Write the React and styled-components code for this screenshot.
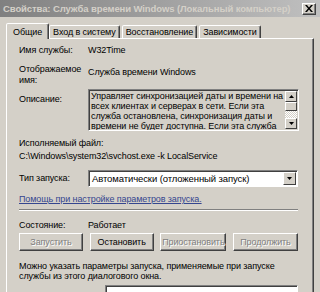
import React from "react";
import styled, { createGlobalStyle } from "styled-components";

const GlobalStyle = createGlobalStyle`
  html, body {
    margin: 0;
    padding: 0;
    background: #d4d0c8;
  }
  body {
    font-family: "Liberation Sans", Arial, sans-serif;
    font-size: 9px;
    letter-spacing: -0.1px;
    color: #000;
  }
`;

const tabs = ["Общие", "Вход в систему", "Восстановление", "Зависимости"];

const buttons = [
  { label: "Запустить", width: 64, disabled: true },
  { label: "Остановить", width: 64 },
  { label: "Приостановить", width: 66, disabled: true },
  { label: "Продолжить", width: 65, disabled: true },
];

const descLines = [
  "Управляет синхронизацией даты и времени на",
  "всех клиентах и серверах в сети. Если эта",
  "служба остановлена, синхронизация даты и",
  "времени не будет доступна. Если эта служба",
];

const App = () => {
  return (
    <Window>
      <GlobalStyle />
      <TitleBar>
        <Title>Свойства: Служба времени Windows (Локальный компьютер)</Title>
        <CloseButton>
          <svg width="8" height="7" viewBox="0 0 8 7">
            <path d="M0 0h2l2 2.5L6 0h2L5 3.5 8 7H6L4 4.5 2 7H0l3-3.5z" fill="#000" />
          </svg>
        </CloseButton>
      </TitleBar>

      <Body>
        <TabStrip>
          {tabs.map((tab, i) => (
            <Tab key={tab} active={i === 0}>
              {tab}
            </Tab>
          ))}
        </TabStrip>

        <Panel>
          <FieldRow height={19}>
            <Label>Имя службы:</Label>
            <Value>W32Time</Value>
          </FieldRow>

          <FieldRow height={23}>
            <Label>
              Отображаемое
              <br />
              имя:
            </Label>
            <Value offset={3}>Служба времени Windows</Value>
          </FieldRow>

          <FieldRow height={44} top={2}>
            <Label offset={5}>Описание:</Label>
            <DescBox>
              <DescText>
                {descLines.map((line) => (
                  <DescLine key={line}>{line}</DescLine>
                ))}
              </DescText>
              <ScrollBar>
                <ScrollArrow>
                  <svg width="5" height="3" viewBox="0 0 5 3">
                    <path d="M2.5 0L5 3H0z" fill="#000" />
                  </svg>
                </ScrollArrow>
                <ScrollThumb />
                <ScrollTrack />
                <ScrollArrow>
                  <svg width="5" height="3" viewBox="0 0 5 3">
                    <path d="M0 0h5L2.5 3z" fill="#000" />
                  </svg>
                </ScrollArrow>
              </ScrollBar>
            </DescBox>
          </FieldRow>

          <Plain top={5}>Исполняемый файл:</Plain>
          <Plain top={2}>C:\Windows\system32\svchost.exe -k LocalService</Plain>

          <FieldRow height={17} top={8}>
            <Label offset={3}>Тип запуска:</Label>
            <Select>
              <SelectText>Автоматически (отложенный запуск)</SelectText>
              <SelectButton>
                <svg width="5" height="3" viewBox="0 0 5 3">
                  <path d="M0 0h5L2.5 3z" fill="#000" />
                </svg>
              </SelectButton>
            </Select>
          </FieldRow>

          <HelpLink>Помощь при настройке параметров запуска.</HelpLink>

          <Separator />

          <FieldRow height={13} top={9}>
            <Label>Состояние:</Label>
            <Value>Работает</Value>
          </FieldRow>

          <ButtonRow>
            {buttons.map((b) => (
              <Button key={b.label} width={b.width} disabled={b.disabled}>
                {b.label}
              </Button>
            ))}
          </ButtonRow>

          <Note>
            Можно указать параметры запуска, применяемые при запуске
            <br />
            службы из этого диалогового окна.
          </Note>

          <ParamsRow>
            <ParamsInput />
          </ParamsRow>
        </Panel>
      </Body>
    </Window>
  );
};

const Window = styled.div`
  width: 320px;
  height: 292px;
  overflow: hidden;
  display: flex;
  flex-direction: column;
  background: #d4d0c8;
`;

const TitleBar = styled.div`
  height: 17px;
  display: flex;
  align-items: center;
  justify-content: space-between;
  padding: 0 4px 0 3px;
  background: linear-gradient(to right, #808080, #c0c0c0);
  flex-shrink: 0;
`;

const Title = styled.div`
  font-weight: bold;
  font-size: 9.5px;
  letter-spacing: -0.1px;
  color: #d4d0c8;
  white-space: nowrap;
`;

const CloseButton = styled.div`
  width: 12px;
  height: 10px;
  display: flex;
  align-items: center;
  justify-content: center;
  background: #d4d0c8;
  border: 1px solid;
  border-color: #fff #404040 #404040 #fff;
  box-shadow: inset -1px -1px 0 #808080;
`;

const Body = styled.div`
  flex: 1;
  display: flex;
  flex-direction: column;
  padding: 5px 6px 0 6px;
`;

const TabStrip = styled.div`
  display: flex;
  align-items: flex-end;
  height: 16px;
  position: relative;
  z-index: 1;
`;

const Tab = styled.div`
  height: ${(p) => (p.active ? 16 : 13)}px;
  padding: 0 ${(p) => (p.active ? 6 : 3)}px;
  margin: ${(p) => (p.active ? "0 -1px -1px 0" : "0 1px 0 1px")};
  display: flex;
  align-items: center;
  background: #d4d0c8;
  border: 1px solid;
  border-bottom: none;
  border-color: #fff #404040 transparent #fff;
  box-shadow: inset -1px 0 0 #808080;
  border-radius: 2px 2px 0 0;
  white-space: nowrap;
  box-sizing: border-box;
`;

const Panel = styled.div`
  flex: 1;
  display: flex;
  flex-direction: column;
  padding: 6px 15px 0 12px;
  border-left: 1px solid #fff;
  border-top: 1px solid #fff;
  border-right: 1px solid #404040;
  box-shadow: inset -1px 0 0 #808080;
`;

const FieldRow = styled.div`
  display: grid;
  grid-template-columns: 69px 1fr;
  height: ${(p) => p.height}px;
  margin-top: ${(p) => p.top || 0}px;
`;

const Label = styled.div`
  color: #000;
  line-height: 11px;
  padding-top: ${(p) => p.offset || 0}px;
`;

const Value = styled.div`
  line-height: 11px;
  padding-top: ${(p) => p.offset || 0}px;
`;

const DescBox = styled.div`
  display: flex;
  height: 42px;
  border: 1px solid;
  border-color: #808080 #fff #fff #808080;
  box-shadow: inset 1px 1px 0 #404040;
  background: #d4d0c8;
  box-sizing: border-box;
`;

const DescText = styled.div`
  flex: 1;
  padding: 1px 2px 0 2px;
  overflow: hidden;
`;

const DescLine = styled.div`
  line-height: 10px;
  white-space: nowrap;
`;

const ScrollBar = styled.div`
  width: 12px;
  display: flex;
  flex-direction: column;
  padding: 1px 1px 1px 0;
`;

const ScrollArrow = styled.div`
  height: 11px;
  display: flex;
  align-items: center;
  justify-content: center;
  background: #d4d0c8;
  border: 1px solid;
  border-color: #fff #404040 #404040 #fff;
  box-sizing: border-box;
`;

const ScrollThumb = styled.div`
  height: 9px;
  background: #d4d0c8;
  border: 1px solid;
  border-color: #fff #404040 #404040 #fff;
  box-sizing: border-box;
`;

const ScrollTrack = styled.div`
  flex: 1;
  background-image: repeating-conic-gradient(#fff 0 25%, #d4d0c8 0 50%);
  background-size: 2px 2px;
`;

const Plain = styled.div`
  line-height: 11px;
  margin-top: ${(p) => p.top || 0}px;
`;

const Select = styled.div`
  display: flex;
  height: 17px;
  background: #fff;
  border: 1px solid;
  border-color: #808080 #fff #fff #808080;
  box-shadow: inset 1px 1px 0 #404040;
  box-sizing: border-box;
`;

const SelectText = styled.div`
  flex: 1;
  padding: 2px 3px 0 3px;
  font-size: 9.5px;
  line-height: 11px;
`;

const SelectButton = styled.div`
  width: 13px;
  margin: 1px 1px 1px 0;
  display: flex;
  align-items: center;
  justify-content: center;
  background: #d4d0c8;
  border: 1px solid;
  border-color: #fff #404040 #404040 #fff;
  box-sizing: border-box;
`;

const HelpLink = styled.div`
  margin-top: 7px;
  line-height: 11px;
  color: #35468f;
  text-decoration: underline;
`;

const Separator = styled.div`
  margin: 4px 0 0 0;
  height: 0;
  border-top: 1px solid #808080;
  border-bottom: 1px solid #fff;
`;

const ButtonRow = styled.div`
  display: flex;
  justify-content: space-between;
`;

const Button = styled.div`
  width: ${(p) => p.width}px;
  height: 18px;
  display: flex;
  align-items: center;
  justify-content: center;
  background: #d4d0c8;
  border: 1px solid;
  border-color: #fff #404040 #404040 #fff;
  box-shadow: inset -1px -1px 0 #808080;
  box-sizing: border-box;
  color: ${(p) => (p.disabled ? "#808080" : "#000")};
  text-shadow: ${(p) => (p.disabled ? "1px 1px 0 #fff" : "none")};
`;

const Note = styled.div`
  margin-top: 10px;
  line-height: 10px;
`;

const ParamsRow = styled.div`
  display: flex;
  justify-content: flex-end;
  margin-top: 4px;
`;

const ParamsInput = styled.div`
  width: 191px;
  height: 17px;
  background: #fff;
  border: 1px solid;
  border-color: #808080 #fff #fff #808080;
  box-shadow: inset 1px 1px 0 #404040;
`;

export default App;
